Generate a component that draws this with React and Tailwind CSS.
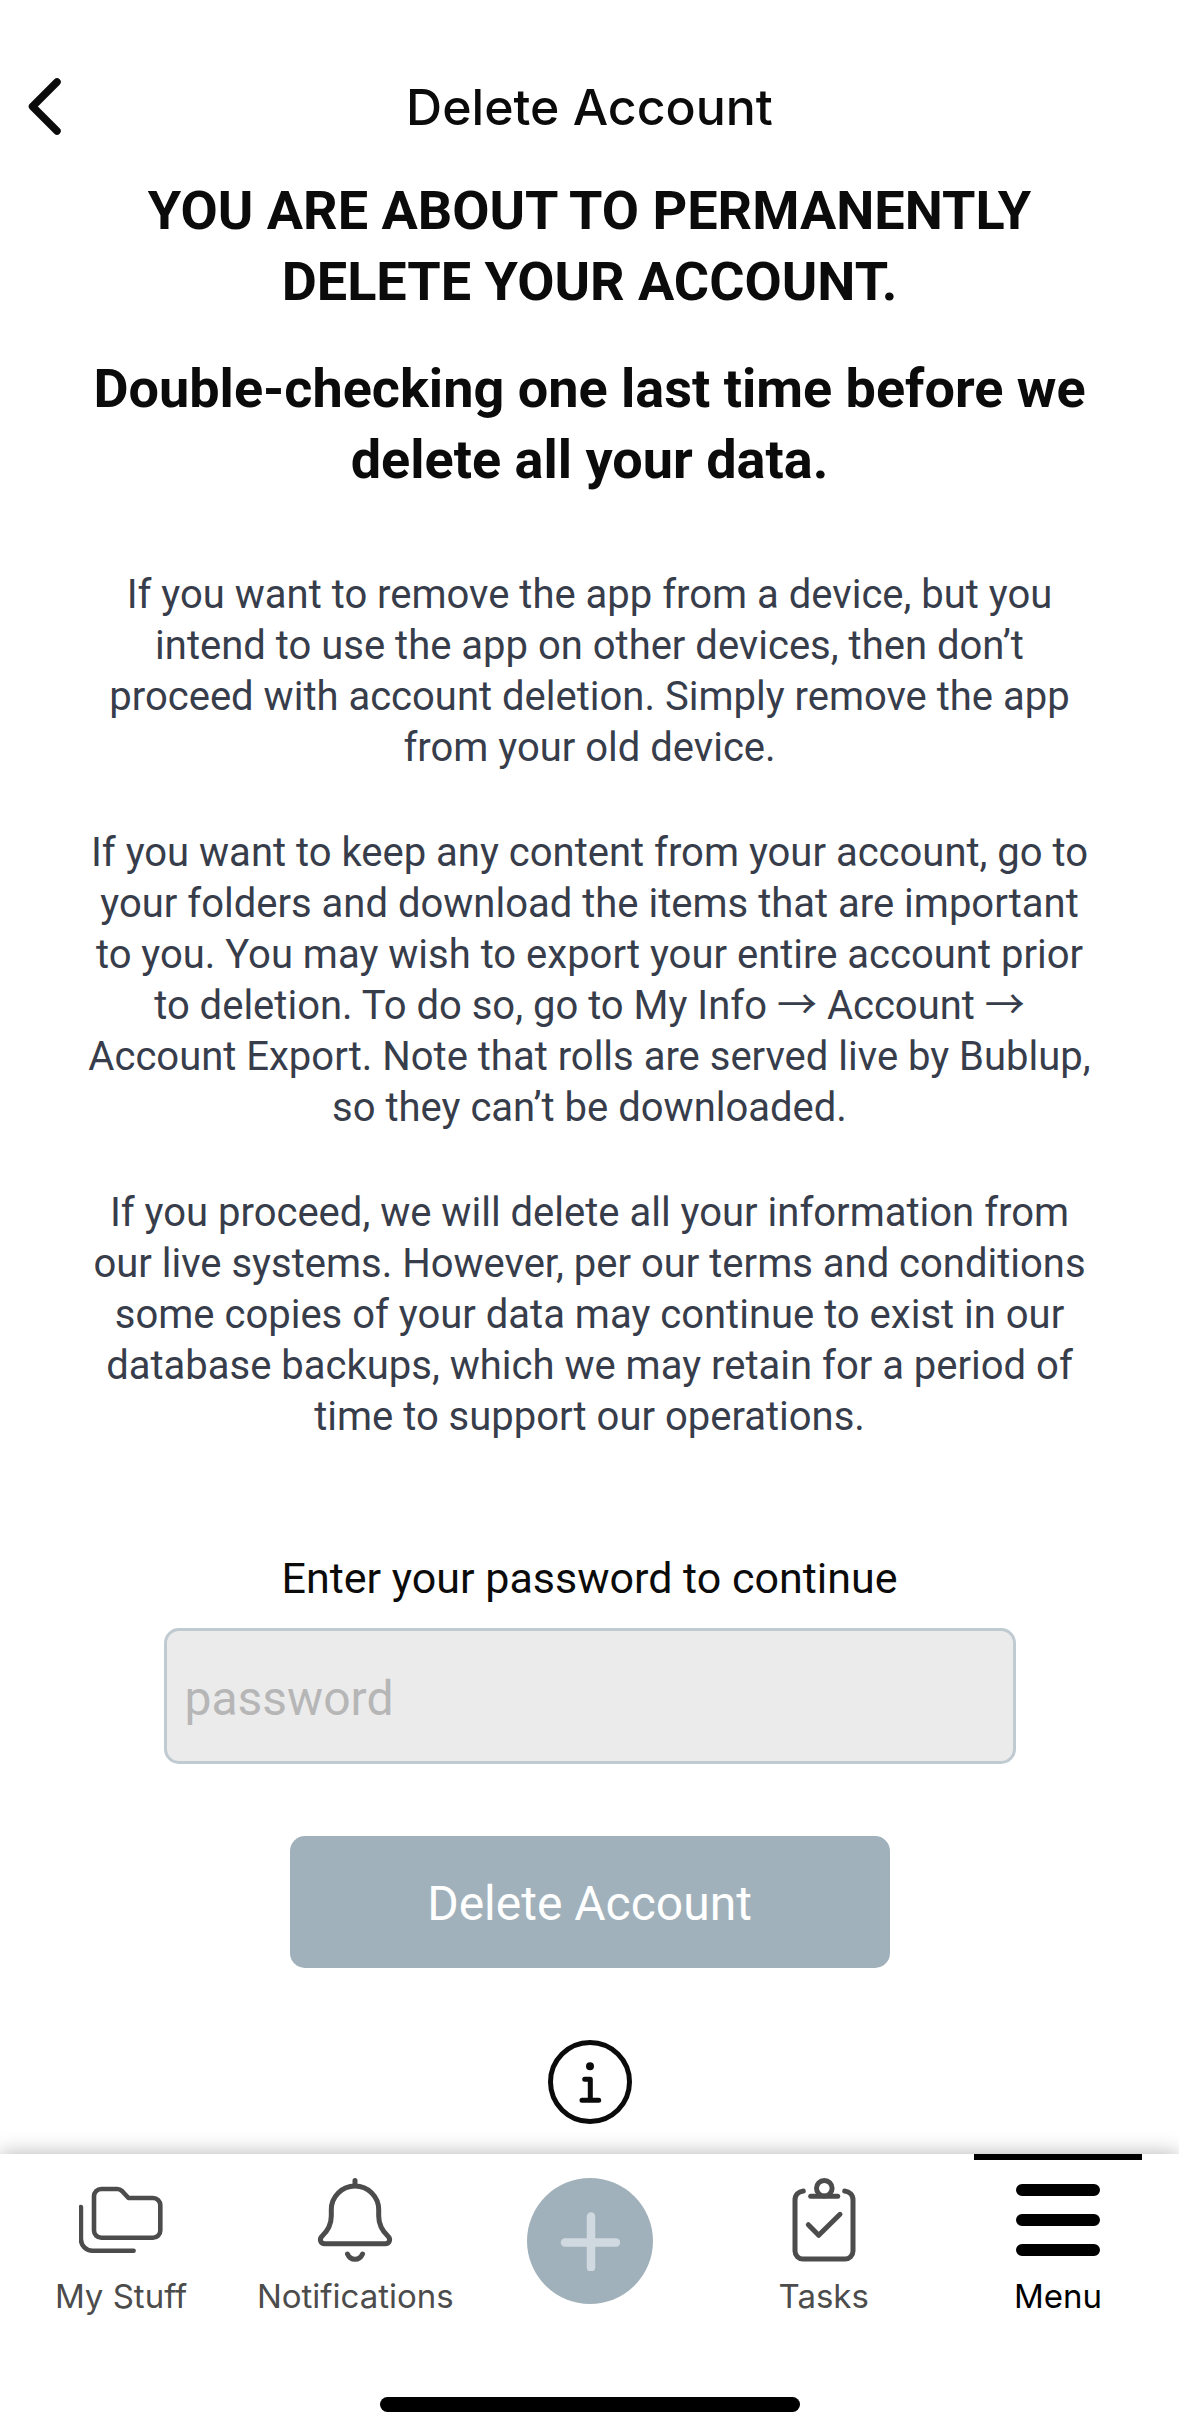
import { useState } from 'react'
import clsx from 'clsx'

function BackIcon() {
  return (
    <svg viewBox="0 0 36 60" className="w-9 h-15" fill="none" stroke="currentColor" strokeWidth="7.5" strokeLinecap="round" strokeLinejoin="round">
      <path d="M31 6 6.5 30.5 31 55" />
    </svg>
  )
}

function InfoIcon() {
  return (
    <svg viewBox="0 0 84 84" className="size-21" fill="none" stroke="currentColor" strokeWidth="5" strokeLinecap="round" strokeLinejoin="round">
      <circle cx="42" cy="42" r="39.5" />
      <circle cx="42" cy="26.3" r="4" fill="currentColor" stroke="none" />
      <path d="M36.7 39.3h5.6v21M34 60.3h16.7" />
    </svg>
  )
}

function FoldersIcon() {
  return (
    <svg viewBox="0 0 84 84" className="size-21" fill="none" stroke="currentColor" strokeWidth="4.6" strokeLinecap="round" strokeLinejoin="round">
      <path d="M1.9 29v32a11.7 11.7 0 0 0 11.7 11.7h41" />
      <path d="M22.3 11H38a7 7 0 0 1 5 2l6.5 7H74a7.3 7.3 0 0 1 7.3 7.3v25.1a7.3 7.3 0 0 1-7.3 7.3H22.3a7.3 7.3 0 0 1-7.3-7.3V18.3a7.3 7.3 0 0 1 7.3-7.3z" />
    </svg>
  )
}

function BellIcon() {
  return (
    <svg viewBox="0 0 84 84" className="size-21" fill="none" stroke="currentColor" strokeWidth="5" strokeLinecap="round" strokeLinejoin="round">
      <path d="M42 2.5V7" />
      <path d="M18.3 31.7a23.7 23.7 0 0 1 47.4 0V38c0 8 3.5 14.8 9.3 20.3 3.2 3.2 1.2 7.4-2.8 7.4H11.8c-4 0-6-4.2-2.8-7.4 5.8-5.5 9.3-12.3 9.3-20.3z" />
      <path d="M34.5 76c1.5 3.5 4.3 5.3 7.5 5.3s6-1.8 7.5-5.3" />
    </svg>
  )
}

function TasksIcon() {
  return (
    <svg viewBox="0 0 84 84" className="size-21" fill="none" stroke="currentColor" strokeWidth="5" strokeLinecap="round" strokeLinejoin="round">
      <path d="M21.3 13C16.5 13.5 13 17 13 22v51a8 8 0 0 0 8 8h42a8 8 0 0 0 8-8V22c0-5-3.5-8.5-8.3-9" />
      <path d="M28.7 18.3h27" />
      <circle cx="42.3" cy="10.3" r="7.8" />
      <path d="m26.3 46.7 10.4 10.6 21.3-21" />
    </svg>
  )
}

function MenuIcon() {
  return (
    <svg viewBox="0 0 84 84" className="size-21" fill="none" stroke="currentColor" strokeWidth="12" strokeLinecap="round">
      <path d="M6 12h72M6 42h72M6 72h72" />
    </svg>
  )
}

function PlusIcon() {
  return (
    <svg viewBox="0 0 60 60" className="size-15" fill="none" stroke="currentColor" strokeWidth="8.5" strokeLinecap="round">
      <path d="M31 5.5v51M5 31.5h51" />
    </svg>
  )
}

function NavItem({ icon, label, active }) {
  return (
    <li className="flex-1 flex flex-col items-center">
      <div className={clsx('w-42 h-1.5', active && 'bg-black')} />
      <a
        href="#"
        aria-current={active ? 'page' : undefined}
        className={clsx('flex flex-col items-center gap-3.5 pt-4.5', active ? 'text-black' : 'text-[#4c4c4c]')}
      >
        {icon}
        <span className="text-[33px] leading-10">{label}</span>
      </a>
    </li>
  )
}

function BottomNav() {
  return (
    <nav className="relative bg-white shadow-[0_0_20px_rgba(0,0,0,0.3)] font-['Inter',sans-serif]">
      <ul className="flex px-1">
        <NavItem icon={<FoldersIcon />} label="My Stuff" />
        <NavItem icon={<BellIcon />} label="Notifications" />
        <li className="flex-1 flex justify-center pt-6">
          <button aria-label="Add" className="size-31.5 rounded-full bg-[#a1b1bb] text-[#d1d9e0] flex items-center justify-center">
            <PlusIcon />
          </button>
        </li>
        <NavItem icon={<TasksIcon />} label="Tasks" />
        <NavItem icon={<MenuIcon />} label="Menu" active />
      </ul>
      <div className="mx-auto mt-[81px] mb-6 w-105 h-[15px] rounded-full bg-black" />
    </nav>
  )
}

function Arrow() {
  return <span className="font-['Noto_Sans_CJK_JP',sans-serif] leading-none">→</span>
}

function App() {
  const [password, setPassword] = useState('')

  return (
    <div className="min-h-screen flex flex-col bg-white text-[#0b0b0b] font-['Roboto',sans-serif]">
      <header className="relative flex items-center justify-center pt-18 pb-2">
        <button aria-label="Back" className="absolute left-6.5 top-19">
          <BackIcon />
        </button>
        <h1 className="font-['Inter',sans-serif] font-medium text-[50px] leading-[70px]">Delete Account</h1>
      </header>

      <main className="flex-1 flex flex-col items-center px-21 pt-[25px] pb-7 text-center">
        <h2 className="font-bold text-[54px] leading-[71px]">
          YOU ARE ABOUT TO PERMANENTLY
          <br />
          DELETE YOUR ACCOUNT.
        </h2>
        <h3 className="mt-9 font-bold text-[54px] leading-[71px]">
          Double-checking one last time before we
          <br />
          delete all your data.
        </h3>

        <div className="mt-[74px] flex flex-col gap-[54px] text-[40px] leading-[51px] text-[#373d4a]">
          <p>
            If you want to remove the app from a device, but you
            <br />
            intend to use the app on other devices, then don’t
            <br />
            proceed with account deletion. Simply remove the app
            <br />
            from your old device.
          </p>
          <p>
            If you want to keep any content from your account, go to
            <br />
            your folders and download the items that are important
            <br />
            to you. You may wish to export your entire account prior
            <br />
            to deletion. To do so, go to My Info <Arrow /> Account <Arrow />
            <br />
            Account Export. Note that rolls are served live by Bublup,
            <br />
            so they can’t be downloaded.
          </p>
          <p>
            If you proceed, we will delete all your information from
            <br />
            our live systems. However, per our terms and conditions
            <br />
            some copies of your data may continue to exist in our
            <br />
            database backups, which we may retain for a period of
            <br />
            time to support our operations.
          </p>
        </div>

        <form className="mt-28 w-full flex flex-col items-center" onSubmit={(e) => e.preventDefault()}>
          <label htmlFor="password" className="text-[43px] leading-12">
            Enter your password to continue
          </label>
          <input
            id="password"
            type="password"
            placeholder="password"
            value={password}
            onChange={(e) => setPassword(e.target.value)}
            className="mt-6.5 w-[852px] max-w-full h-34 px-4.5 pt-1 rounded-[15px] border-3 border-[#c0cad1] bg-[#ebebeb] text-[48px] placeholder:text-[#b6b6b7]"
          />
          <button type="submit" className="mt-18 w-150 max-w-full h-33 pt-1 rounded-[15px] bg-[#a1b1bb] text-white text-[48px]">
            Delete Account
          </button>
        </form>

        <button aria-label="More information" className="mt-18">
          <InfoIcon />
        </button>
      </main>

      <BottomNav />
    </div>
  )
}

export default App
